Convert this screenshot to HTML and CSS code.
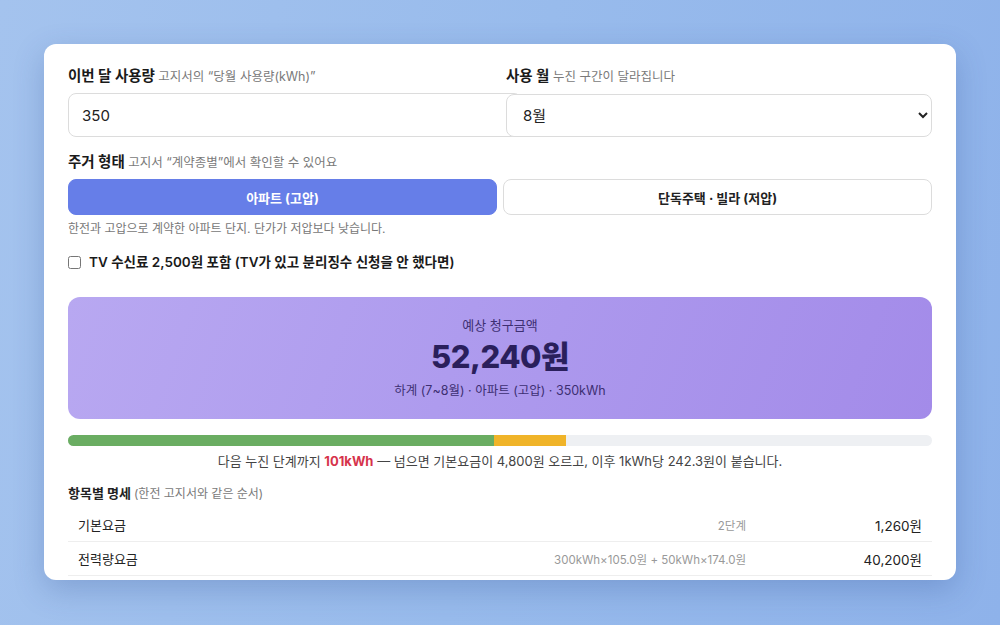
FILE: index.html
```html
<!DOCTYPE html>
<html lang="ko">
<head>
<meta charset="utf-8">
<link rel="stylesheet" href="styles.css">
</head>
<body>
<div class="card">
  <div class="grid2">
    <div class="field">
      <label class="lbl">이번 달 사용량 <span class="hint">고지서의 “당월 사용량(kWh)”</span></label>
      <input class="inp" type="text" value="350">
    </div>
    <div class="field">
      <label class="lbl">사용 월 <span class="hint">누진 구간이 달라집니다</span></label>
      <select class="sel"><option>8월</option></select>
    </div>
  </div>
  <div class="lbl lbl-house">주거 형태 <span class="hint">고지서 “계약종별”에서 확인할 수 있어요</span></div>
  <div class="seg">
    <button class="segbtn active">아파트 (고압)</button>
    <button class="segbtn">단독주택 · 빌라 (저압)</button>
  </div>
  <div class="help">한전과 고압으로 계약한 아파트 단지. 단가가 저압보다 낮습니다.</div>
  <label class="chk"><input type="checkbox" class="cb"> TV 수신료 2,500원 포함 (TV가 있고 분리징수 신청을 안 했다면)</label>
  <div class="result">
    <div class="r-title">예상 청구금액</div>
    <div class="r-amount">52,240원</div>
    <div class="r-sub">하계 (7~8월) · 아파트 (고압) · 350kWh</div>
  </div>
  <div class="bar">
    <div class="bar-g" style="width:49.3%"></div>
    <div class="bar-y" style="width:8.35%"></div>
  </div>
  <div class="note">다음 누진 단계까지 <b class="red">101kWh</b> — 넘으면 기본요금이 4,800원 오르고, 이후 1kWh당 242.3원이 붙습니다.</div>
  <div class="sect">항목별 명세 <span class="hint">(한전 고지서와 같은 순서)</span></div>
  <div class="rows">
    <div class="row"><span class="nm">기본요금</span><span class="ds">2단계</span><span class="am">1,260원</span></div>
    <div class="row"><span class="nm">전력량요금</span><span class="ds">300kWh×105.0원 + 50kWh×174.0원</span><span class="am">40,200원</span></div>
  </div>
</div>
</body>
</html>
```

FILE: styles.css
```css
* { font-family: Inter, "Noto Sans CJK KR", sans-serif; }
html, body { margin: 0; height: 625px; overflow: hidden; }
body {
  background: linear-gradient(100deg, #a4c3ee 0%, #98bbec 50%, #8eb2ea 100%);
  padding: 44px;
  box-sizing: border-box;
}
.card {
  background: #fff;
  border-radius: 12px;
  height: 536px;
  overflow: hidden;
  padding: 22px 24px 0;
  box-sizing: border-box;
  box-shadow: 0 10px 30px rgba(40, 70, 140, 0.25);
  color: #1f1f1f;
}
.grid2 {
  display: grid;
  grid-template-columns: 1fr 1fr;
  column-gap: 12px;
}
.field { display: flex; flex-direction: column; }
.lbl {
  font-size: 14.5px;
  font-weight: 700;
  line-height: 20px;
  margin-bottom: 6px;
  color: #1a1a1a;
}
.hint { font-size: 12.5px; font-weight: 400; color: #7a7a7a; }
.inp {
  width: 100%;
  height: 42px;
  padding: 0 13px;
  border: 1px solid #dcdcdc;
  border-radius: 8px;
  font-size: 15px;
  color: #222;
  background: #fff;
  outline: none;
}
.sel {
  height: 43px;
  margin-top: 1px;
  padding: 0 10px 0 12px;
  border: 1px solid #dcdcdc;
  border-radius: 8px;
  font-size: 15px;
  color: #222;
  background: #fff;
  position: relative;
}
.lbl-house { margin-top: 15px; margin-bottom: 6px; }
.seg { display: flex; gap: 6px; }
.segbtn {
  flex: 1;
  height: 36px;
  border: 1px solid #dcdcdc;
  border-radius: 8px;
  background: #fff;
  font-size: 13px;
  font-weight: 700;
  color: #222;
}
.segbtn.active { background: #667ee8; border-color: #667ee8; color: #fff; }
.help { font-size: 12px; color: #777; margin-top: 5px; line-height: 17px; }
.chk {
  display: flex;
  align-items: center;
  gap: 8px;
  font-size: 13.5px;
  font-weight: 600;
  margin-top: 15px;
  line-height: 20px;
  color: #1a1a1a;
}
.cb { margin: 0; width: 13px; height: 13px; }
.result {
  margin-top: 25px;
  height: 122px;
  border-radius: 12px;
  background: linear-gradient(110deg, #b8a8f1 0%, #ae9bee 45%, #a38be9 100%);
  display: flex;
  flex-direction: column;
  align-items: center;
  justify-content: center;
  color: #3d2f72;
}
.r-title { font-size: 13px; line-height: 18px; }
.r-amount { font-size: 31px; font-weight: 800; line-height: 42px; color: #2a1f5c; letter-spacing: -0.5px; margin: 2px 0 4px; }
.r-sub { font-size: 12.5px; line-height: 18px; }
.bar {
  margin-top: 16px;
  height: 11px;
  border-radius: 6px;
  background: #eef0f3;
  display: flex;
  overflow: hidden;
}
.bar-g { background: #6aad62; }
.bar-y { background: #f0b429; }
.note { text-align: center; font-size: 13px; color: #444; margin-top: 6px; line-height: 18px; }
.red { color: #d6334b; }
.sect { font-size: 13px; font-weight: 700; margin-top: 14px; line-height: 18px; color: #222; }
.sect .hint { font-size: 12px; }
.rows { margin-top: 5px; }
.row {
  display: grid;
  grid-template-columns: 1fr auto 160px;
  column-gap: 16px;
  align-items: center;
  height: 33px;
  padding: 0 10px;
  border-bottom: 1px solid #eeeeee;
}
.nm { font-size: 13px; color: #222; }
.ds { font-size: 11.5px; color: #999; text-align: right; }
.am { font-size: 13.5px; color: #222; text-align: right; font-weight: 400; }
```
